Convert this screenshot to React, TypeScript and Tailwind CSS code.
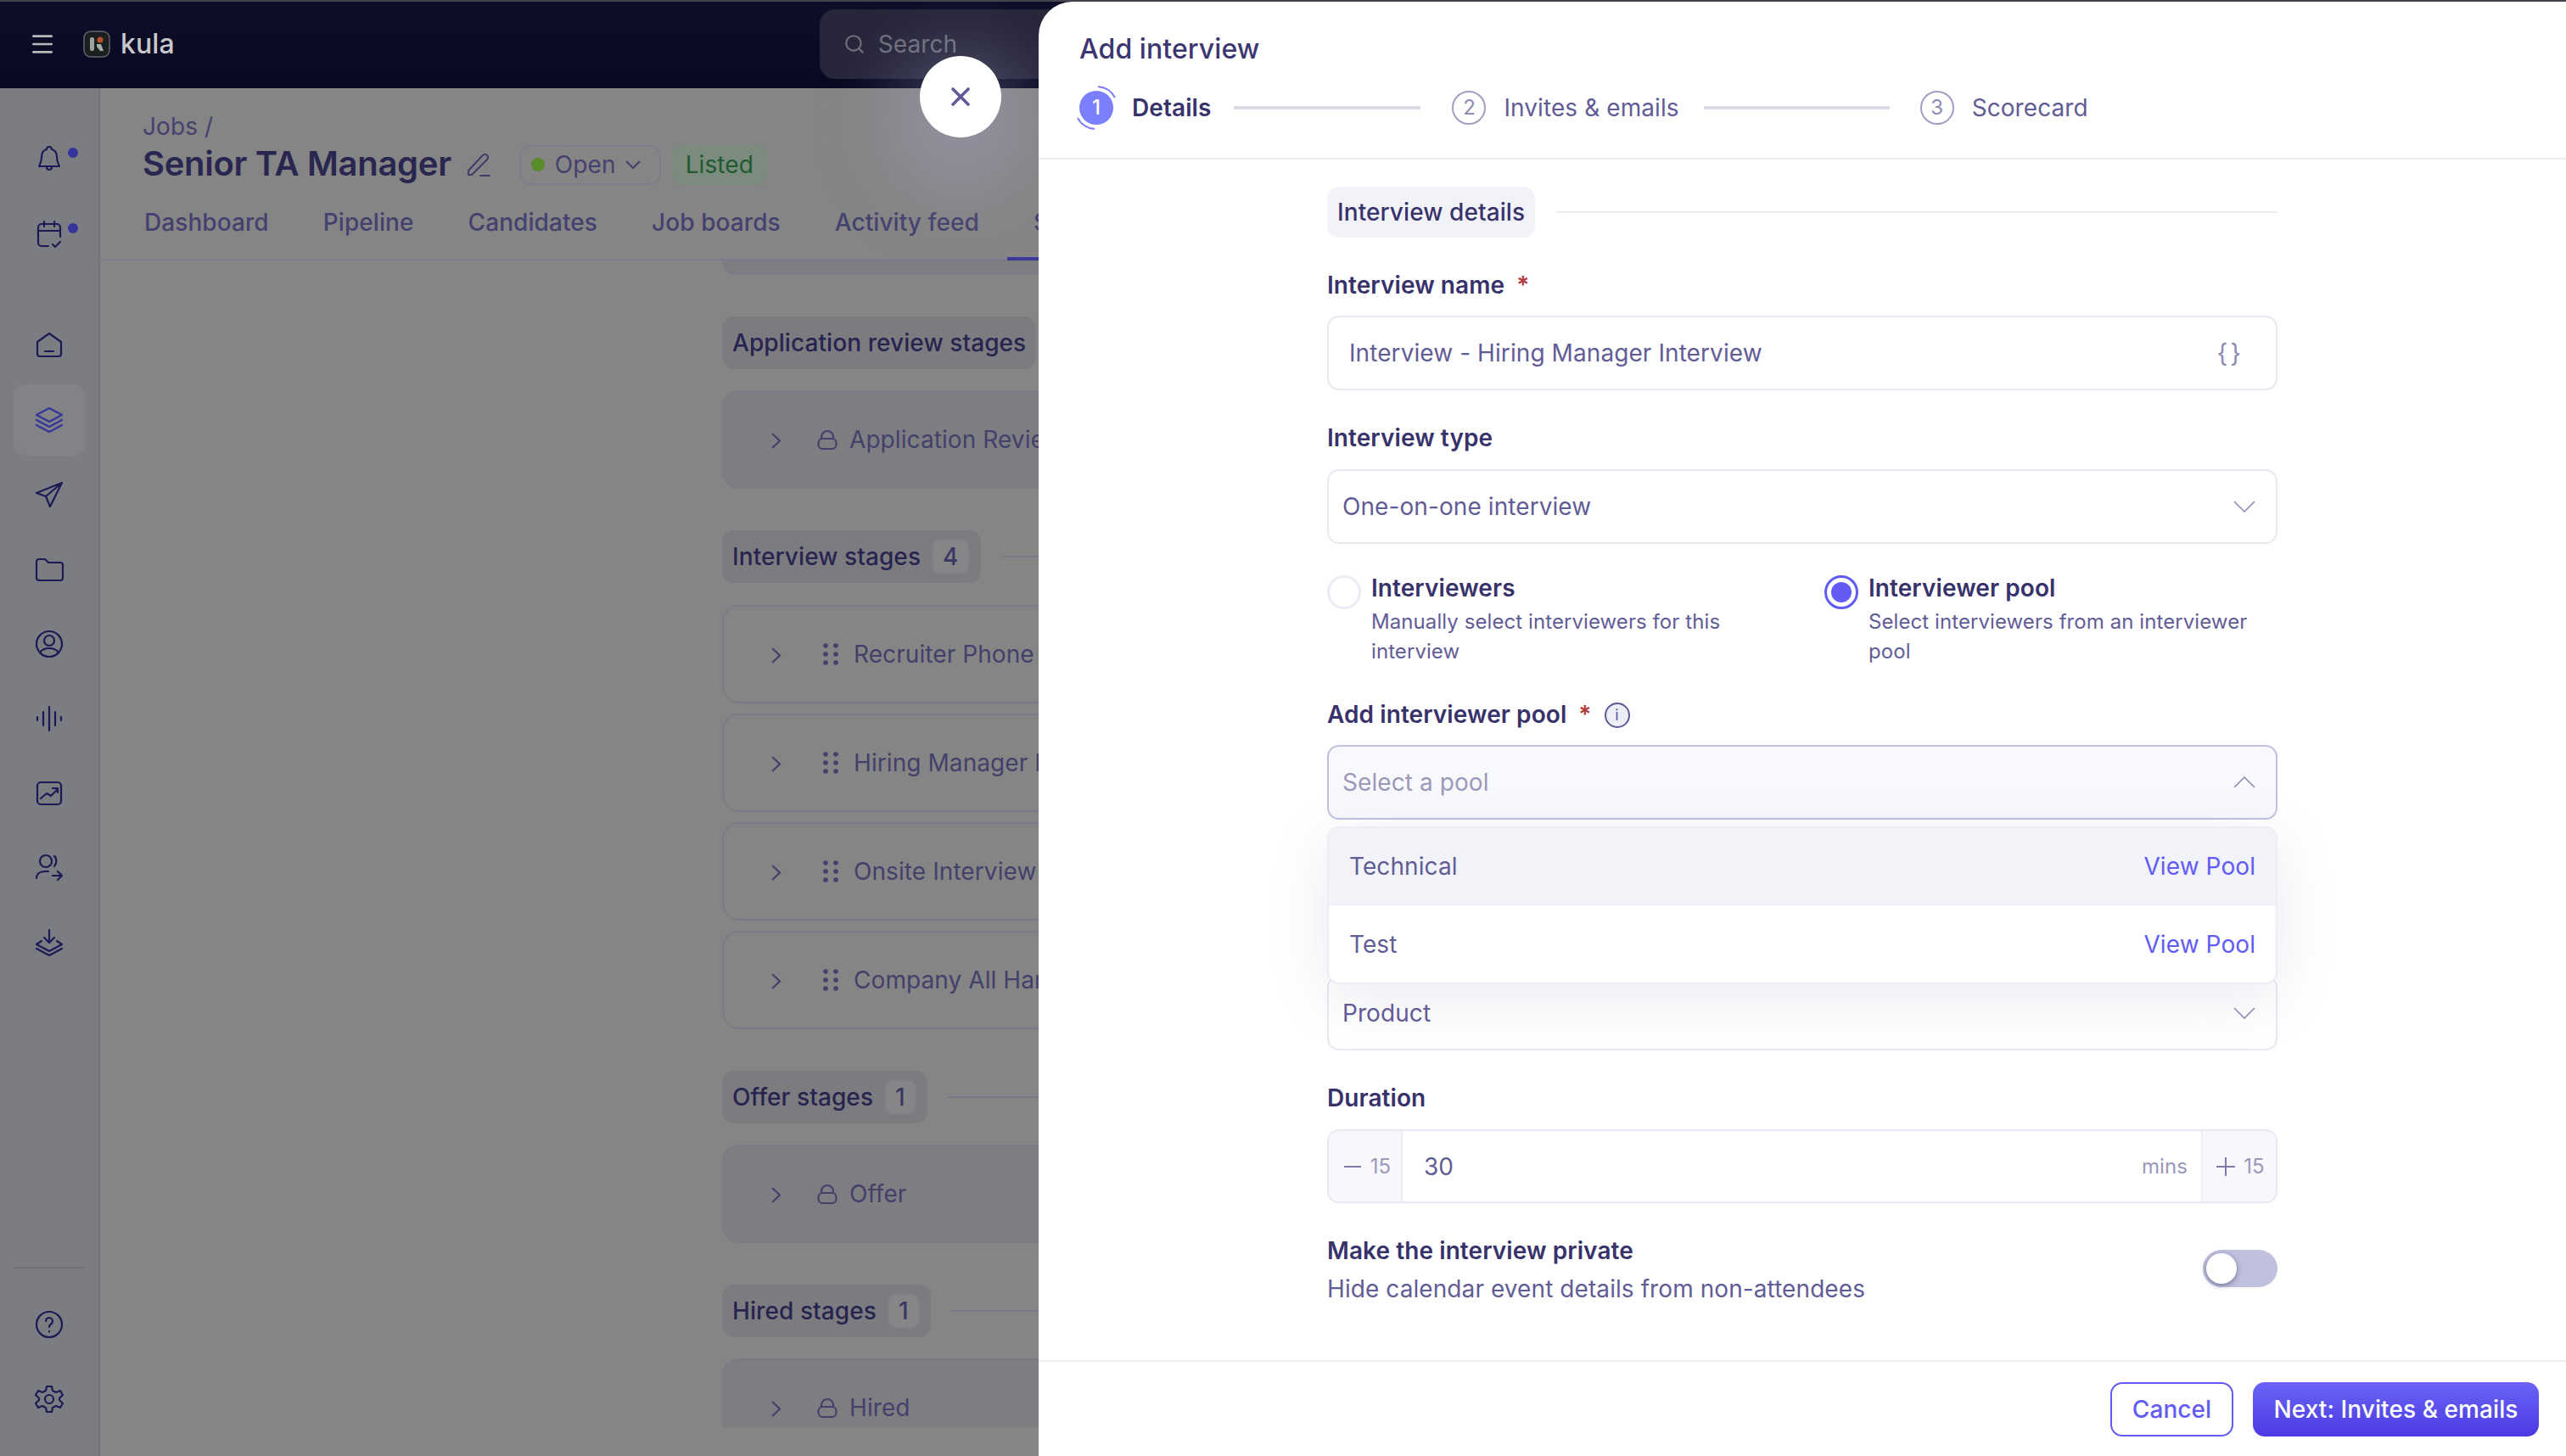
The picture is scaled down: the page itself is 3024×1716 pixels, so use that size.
import { Menu, Search, X } from "lucide-react";
import type { ReactNode } from "react";

const NavIcon = ({ children, active }: { children: ReactNode; active?: boolean }) => (
  <div className={`flex h-[84px] w-[84px] items-center justify-center rounded-[14px] ${active ? "bg-[#828387] text-[#35349a]" : "text-[#1c1a54]"}`}>
    <svg width="36" height="36" viewBox="0 0 36 36" fill="none" stroke="currentColor" strokeWidth="2.2" strokeLinecap="round" strokeLinejoin="round">
      {children}
    </svg>
  </div>
);

const Chevron = ({ up, className }: { up?: boolean; className?: string }) => (
  <svg className={className} width="26" height="14" viewBox="0 0 26 14" fill="none" stroke="currentColor" strokeWidth="1.6">
    <path d={up ? "M1 13 13 1l12 12" : "M1 1l12 12L25 1"} />
  </svg>
);

const Pill = ({ label, count, line }: { label: string; count?: number; line?: boolean }) => (
  <div className="flex items-center">
    <div className={`flex h-[62px] shrink-0 items-center gap-[13px] rounded-[14px] bg-[#7c7c80] pl-[12px] text-[28px] font-medium text-[#27244f] ${count !== undefined ? "pr-[13px]" : "pr-[12px]"}`}>
      {label}
      {count !== undefined && (
        <span className="flex h-[42px] items-center justify-center rounded-[10px] border-2 border-[#7f7f88] bg-[#868688] px-[11px] text-[#3a3765]">
          {count}
        </span>
      )}
    </div>
    {line && <div className="ml-[24px] h-[2px] flex-1 bg-[#79798a]" />}
  </div>
);

const StageCard = ({ label, locked }: { label: string; locked?: boolean }) => (
  <div className={`flex h-[116px] items-center rounded-[20px] border-2 border-[#7b7b86] pl-[55px] text-[28px] text-[#43406b] ${locked ? "bg-[#7e7e82]" : ""}`}>
    <svg className="mt-[2px] shrink-0" width="13" height="21" viewBox="0 0 13 21" fill="none" stroke="currentColor" strokeWidth="2.2">
      <path d="M2 2l9 8.5L2 19" />
    </svg>
    {locked ? (
      <svg className="ml-[42px] mr-[14px] shrink-0" width="24" height="24" viewBox="0 0 24 24" fill="none" stroke="currentColor" strokeWidth="2.2">
        <rect x="1.5" y="11" width="21" height="12" rx="5" />
        <path d="M5 11V9a7 7 0 0 1 14 0v2" />
      </svg>
    ) : (
      <svg className="ml-[49px] mr-[18px] shrink-0" width="18" height="28" viewBox="0 0 18 28" fill="currentColor">
        <circle cx="3" cy="4" r="2.8" />
        <circle cx="15" cy="4" r="2.8" />
        <circle cx="3" cy="14" r="2.8" />
        <circle cx="15" cy="14" r="2.8" />
        <circle cx="3" cy="24" r="2.8" />
        <circle cx="15" cy="24" r="2.8" />
      </svg>
    )}
    <span className="whitespace-nowrap">{label}</span>
  </div>
);

const Label = ({ children, required }: { children: ReactNode; required?: boolean }) => (
  <div className="flex h-[36px] items-center pb-[2px] text-[28px] font-semibold leading-[34px] text-[#38326b]">
    {children}
    {required && <span className="ml-[14px] text-[#b33a3a]">*</span>}
  </div>
);

const SelectBox = ({ value, open, muted }: { value: string; open?: boolean; muted?: boolean }) => (
  <div className={`flex h-[88px] items-center justify-between rounded-[14px] border-2 pl-[16px] pr-[24px] text-[28px] ${open ? "border-[#bfc1de] bg-[#f8f9fd]" : "border-[#e8e8f2] bg-white"} ${muted ? "text-[#9b98ba]" : "text-[#625c96]"}`}>
    {value}
    <Chevron up={open} className="text-[#8f8bb5]" />
  </div>
);

const Radio = ({ title, desc, checked }: { title: string; desc: ReactNode; checked?: boolean }) => (
  <div className="flex w-[586px] gap-[12px]">
    <div className={`flex h-[40px] w-[40px] shrink-0 items-center justify-center rounded-full border-[3px] ${checked ? "border-[#625cf5]" : "border-[#ebebf4]"}`}>
      {checked && <div className="h-[24px] w-[24px] rounded-full bg-[#625cf5]" />}
    </div>
    <div>
      <div className="text-[28px] font-semibold leading-[30px] text-[#38326b]">{title}</div>
      <div className="mt-[7px] text-[24px] leading-[35px] text-[#625c96]">{desc}</div>
    </div>
  </div>
);

const Step = ({ n, label }: { n: number; label: string }) => (
  <div className="flex items-center gap-[21px]">
    <div className="flex h-[40px] w-[40px] items-center justify-center rounded-full border-2 border-[#a19ec2] text-[24px] text-[#8f8bb5]">{n}</div>
    <span className="text-[28px] text-[#625c96]">{label}</span>
  </div>
);

const App = () => {
  return (
    <div className="relative flex h-[1716px] w-[3024px] flex-col overflow-hidden bg-[#858585] font-['Inter',sans-serif] tracking-[0.08px]">
      <div className="h-[2px] bg-[#44454c]" />

      <header className="flex h-[102px] items-center bg-gradient-to-b from-[#0e0e2a] to-[#090922] pb-[2px]">
        <Menu size={32} strokeWidth={2} className="ml-[34px] text-[#b8b8bc]" />
        <svg className="ml-[32px]" width="32" height="32" viewBox="0 0 32 32">
          <rect x="1" y="1" width="30" height="30" rx="8" fill="#1a1f20" stroke="#62646c" strokeWidth="1.5" />
          <rect x="8" y="8" width="5" height="16" rx="2" fill="#9ea3a0" />
          <circle cx="20" cy="11" r="3.5" fill="#b5502f" />
          <path d="M16 16h5l3 8h-4l-4-5z" fill="#a6afa8" />
        </svg>
        <span className="ml-[12px] text-[32px] font-medium text-[#c9c9cc]">kula</span>
        <div className="ml-[760px] flex h-[82px] w-[400px] items-center rounded-[18px] bg-[#26253a] pl-[28px] text-[28px] text-[#6f6f7b]">
          <Search size={26} strokeWidth={2} />
          <span className="ml-[15px]">Search</span>
        </div>
      </header>

      <div className="flex min-h-0 flex-1">
        <aside className="flex w-[118px] shrink-0 flex-col items-center border-r-2 border-[#74757a] bg-[#7c7d82]">
          <div className="relative mt-[41px]">
            <NavIcon>
              <path d="M18 4a3 3 0 0 1 3 3c4 1 6 5 6 9 0 6 2 9 3 11H6c1-2 3-5 3-11 0-4 2-8 6-9a3 3 0 0 1 3-3z" />
              <path d="M15 28a3 3 0 0 0 6 0" />
            </NavIcon>
            <div className="absolute right-[8px] top-[29px] h-[12px] w-[12px] rounded-full bg-[#34359c]" />
          </div>
          <div className="relative mt-[5px]">
            <NavIcon>
              <path d="M17 32H9a4 4 0 0 1-4-4V10a4 4 0 0 1 4-4h18a4 4 0 0 1 4 4v11" />
              <path d="M5 14h26M12 3v6M24 3v6M22 30l3 3 6-6" />
            </NavIcon>
            <div className="absolute right-[8px] top-[29px] h-[12px] w-[12px] rounded-full bg-[#34359c]" />
          </div>
          <div className="mt-[47px]" />
          <div className="flex flex-col gap-[4px]">
            <NavIcon>
              <path d="M4 14 18 4l14 10v14a3 3 0 0 1-3 3H7a3 3 0 0 1-3-3z" />
              <path d="M13 25h10" />
            </NavIcon>
            <NavIcon active>
              <path d="M18 4 33 12 18 20 3 12zM3 18l15 8 15-8M3 24l15 8 15-8" />
            </NavIcon>
            <NavIcon>
              <path d="M33 4 3 16l11 4 5 12zM33 4 14 20" />
            </NavIcon>
            <NavIcon>
              <path d="M3 9a3 3 0 0 1 3-3h7l4 4h14a3 3 0 0 1 3 3v15a3 3 0 0 1-3 3H6a3 3 0 0 1-3-3z" />
            </NavIcon>
            <NavIcon>
              <circle cx="18" cy="18" r="15" />
              <circle cx="18" cy="14" r="6" />
              <path d="M7 28c3-4 7-5 11-5s8 1 11 5" />
            </NavIcon>
            <NavIcon>
              <path d="M4 16v4M11 10v16M18 4v28M25 10v16M32 16v4" />
            </NavIcon>
            <NavIcon>
              <rect x="4" y="5" width="28" height="26" rx="4" />
              <path d="m8 24 7-6 5 3 8-8M22 12h6v5" />
            </NavIcon>
            <NavIcon>
              <circle cx="14" cy="10" r="7" />
              <path d="M24 4c3 2 3 9 0 12M3 30c0-5 4-8 10-8h4M22 27h11M28 22l5 5-5 5" />
            </NavIcon>
            <NavIcon>
              <path d="M18 3v15M12 12l6 6 6-6M9 16l-6 4 15 8 15-8-6-4M3 25l15 8 15-8" />
            </NavIcon>
          </div>
          <div className="mt-[340px] h-[2px] w-[84px] bg-[#717277]" />
          <div className="mt-[24px]">
            <NavIcon>
              <circle cx="18" cy="18" r="15" />
              <path d="M14 14a4 4 0 1 1 6 3.5c-1.5 1-2 2-2 3.5M18 26v.5" />
            </NavIcon>
          </div>
          <div className="mt-[4px]">
            <NavIcon>
              <circle cx="18" cy="18" r="5" />
              <path d="M15 3h6l1 5 4 2 5-2 3 5-4 4v2l4 4-3 5-5-2-4 2-1 5h-6l-1-5-4-2-5 2-3-5 4-4v-2l-4-4 3-5 5 2 4-2z" />
            </NavIcon>
          </div>
        </aside>

        <main className="flex min-w-0 flex-1 flex-col">
          <div className="pl-[50px] pt-[27px]">
            <div className="h-[36px] text-[28px] leading-[36px] text-[#45416f]">Jobs /</div>
            <div className="flex h-[54px] items-center">
              <h1 className="pb-[2px] text-[40px] font-semibold tracking-[-0.3px] text-[#292650]">Senior TA Manager</h1>
              <svg className="ml-[17px] text-[#3f3b6b]" width="30" height="30" viewBox="0 0 30 30" fill="none" stroke="currentColor" strokeWidth="2" strokeLinecap="round" strokeLinejoin="round">
                <path d="M3 27v-5L20 4a3.5 3.5 0 0 1 5 5L7 27z" />
                <path d="M17 28h11" />
              </svg>
              <div className="ml-[33px] flex h-[47px] w-[167px] items-center rounded-[14px] border-2 border-[#7d7c8c] pl-[12px] text-[28px] text-[#45416f]">
                <span className="h-[16px] w-[16px] rounded-full bg-[#5a8b2b]" />
                <span className="ml-[12px]">Open</span>
                <svg className="ml-[10px]" width="20" height="12" viewBox="0 0 20 12" fill="none" stroke="currentColor" strokeWidth="2.2">
                  <path d="M2 2l8 8 8-8" />
                </svg>
              </div>
              <div className="ml-[13px] flex h-[47px] w-[112px] items-center justify-center rounded-[12px] bg-[#7b8b7e] text-[28px] text-[#1f5a2e]">Listed</div>
            </div>
            <nav className="mt-[21px] flex gap-[64px] pl-[2px] text-[28px] font-medium leading-[40px] text-[#45416f]">
              <span>Dashboard</span>
              <span>Pipeline</span>
              <span>Candidates</span>
              <span>Job boards</span>
              <span>Activity feed</span>
              <span>Settings</span>
            </nav>
          </div>
          <div className="relative mt-[23px] h-[2px] bg-[#7d7c8c]">
            <div className="absolute bottom-0 left-[1069px] h-[4px] w-[120px] bg-[#3c3a9c]" />
          </div>

          <div className="ml-[733px] h-[1375px] w-[700px] overflow-hidden">
            <div className="h-[17px] rounded-b-[16px] border-2 border-t-0 border-[#7b7b86] bg-[#7e7e82]" />
            <div className="mt-[49px]"><Pill label="Application review stages" /></div>
            <div className="mt-[25px]"><StageCard label="Application Review" locked /></div>
            <div className="mt-[49px]"><Pill label="Interview stages" count={4} line /></div>
            <div className="mt-[26px] flex flex-col gap-[12px]">
              <StageCard label="Recruiter Phone Screen" />
              <StageCard label="Hiring Manager Interview" />
              <StageCard label="Onsite Interview" />
              <StageCard label="Company All Hands" />
            </div>
            <div className="mt-[49px]"><Pill label="Offer stages" count={1} line /></div>
            <div className="mt-[25px]"><StageCard label="Offer" locked /></div>
            <div className="mt-[49px]"><Pill label="Hired stages" count={1} line /></div>
            <div className="mt-[25px]"><StageCard label="Hired" locked /></div>
          </div>
        </main>
      </div>

      {/* close button sits over the dimmed page */}
      <button className="absolute left-[1084px] top-[66px] z-20 flex h-[96px] w-[96px] items-center justify-center rounded-full bg-white shadow-[0_30px_90px_30px_rgba(165,165,205,0.4)]">
        <X size={36} strokeWidth={2.4} className="text-[#5f5a98]" />
      </button>

      <section className="absolute bottom-0 left-[1224px] right-0 top-[2px] z-30 flex flex-col rounded-tl-[40px] bg-white">
        <div className="h-[186px] shrink-0 border-b-2 border-[#ecedf5] pl-[48px]">
          <h2 className="pt-[34px] text-[32px] font-medium leading-[44px] text-[#3c3670]">Add interview</h2>
          <div className="mt-[26px] flex items-center">
            <div className="relative flex h-[40px] w-[40px] items-center justify-center rounded-full bg-[#7b7ffb] text-[24px] font-medium text-white">
              1
              <svg className="absolute left-[-6px] top-[-6px]" width="52" height="52" viewBox="0 0 52 52" fill="none" stroke="#7b7ffb" strokeWidth="2">
                <path d="M28 1a25 25 0 0 1 20 13" />
                <path d="M4 38a25 25 0 0 0 20 13" />
              </svg>
            </div>
            <span className="ml-[22px] text-[28px] font-semibold text-[#38326b]">Details</span>
            <div className="ml-[27px] mr-[37px] h-[4px] w-[220px] bg-[#d8d9e8]" />
            <Step n={2} label="Invites & emails" />
            <div className="ml-[29px] mr-[36px] h-[4px] w-[219px] bg-[#d8d9e8]" />
            <Step n={3} label="Scorecard" />
          </div>
        </div>

        <div className="min-h-0 flex-1 pl-[340px]">
          <div className="w-[1120px] pt-[32px]">
            <div className="flex items-center">
              <div className="flex h-[60px] items-center rounded-[14px] bg-[#f2f3f9] px-[12px] text-[28px] font-medium text-[#38326b]">Interview details</div>
              <div className="ml-[25px] h-[2px] flex-1 bg-[#ecedf5]" />
            </div>

            <div className="mt-[39px]"><Label required>Interview name</Label></div>
            <div className="mt-[17px] flex h-[88px] items-center justify-between rounded-[14px] border-2 border-[#e8e8f2] pl-[24px] pr-[38px] text-[28px] text-[#625c96]">
              Interview - Hiring Manager Interview
              <span className="text-[30px] tracking-[3px] text-[#8f8bb5]">{"{}"}</span>
            </div>

            <div className="mt-[39px]"><Label>Interview type</Label></div>
            <div className="mt-[18px]"><SelectBox value="One-on-one interview" /></div>

            <div className="mt-[37px] flex justify-between">
              <Radio title="Interviewers" desc={<>Manually select interviewers for this<br />interview</>} />
              <div className="mr-[-52px]">
                <Radio checked title="Interviewer pool" desc={<>Select interviewers from an interviewer<br />pool</>} />
              </div>
            </div>

            <div className="mt-[40px] flex items-center">
              <Label required>Add interviewer pool</Label>
              <div className="ml-[15px] flex h-[30px] w-[30px] items-center justify-center rounded-full border-2 border-[#5d5996] bg-[#eeeef8] text-[18px] leading-none text-[#5d5996]">i</div>
            </div>
            <div className="relative mt-[17px]">
              <SelectBox value="Select a pool" open muted />
              {/* open menu lies over the fields below */}
              <div className="absolute left-0 right-0 top-[96px] z-10 overflow-hidden rounded-[14px] border-2 border-[#ecedf5] bg-white text-[28px] shadow-[0_16px_70px_rgba(90,90,160,0.12)]">
                <div className="flex h-[91px] items-center justify-between border-b-2 border-[#ecedf5] bg-[#f2f3f9] px-[24px]">
                  <span className="text-[#625c96]">Technical</span>
                  <span className="text-[#625cf5]">View Pool</span>
                </div>
                <div className="flex h-[91px] items-center justify-between px-[24px]">
                  <span className="text-[#625c96]">Test</span>
                  <span className="text-[#625cf5]">View Pool</span>
                </div>
              </div>
            </div>

            <div className="mt-[184px]"><SelectBox value="Product" /></div>

            <div className="mt-[39px]"><Label>Duration</Label></div>
            <div className="mt-[18px] flex h-[87px] items-stretch overflow-hidden rounded-[14px] border-2 border-[#e8e8f2]">
              <div className="flex w-[87px] items-center justify-center gap-[11px] border-r-2 border-[#ecedf5] bg-[#f8f8fc] pl-[6px] text-[24px] text-[#9b98ba]">
                <span className="h-[2px] w-[20px] bg-[#7f7ba8]" />
                15
              </div>
              <div className="flex flex-1 items-center justify-between pl-[25px] pr-[16px]">
                <span className="text-[28px] text-[#625c96]">30</span>
                <span className="text-[24px] text-[#9b98ba]">mins</span>
              </div>
              <div className="flex w-[88px] items-center justify-center gap-[10px] border-l-2 border-[#ecedf5] bg-[#f8f8fc] pl-[3px] text-[24px] text-[#9b98ba]">
                <svg width="22" height="22" viewBox="0 0 22 22" stroke="#7f7ba8" strokeWidth="2">
                  <path d="M11 0v22M0 11h22" />
                </svg>
                15
              </div>
            </div>

            <div className="mt-[39px] flex justify-between">
              <div>
                <Label>Make the interview private</Label>
                <div className="mt-[8px] text-[28px] leading-[36px] text-[#625c96]">Hide calendar event details from non-attendees</div>
              </div>
              <div className="mt-[16px] flex h-[44px] w-[88px] items-center rounded-full bg-[#bfc1de] pl-[4px]">
                <div className="h-[36px] w-[36px] rounded-full bg-white shadow-[0_2px_6px_rgba(40,40,80,0.5)]" />
              </div>
            </div>
          </div>
        </div>

        <footer className="flex h-[113px] shrink-0 items-center justify-end gap-[23px] border-t-2 border-[#ecedf5] pr-[32px] text-[28px] font-medium">
          <button className="h-[64px] w-[145px] rounded-[14px] border-2 border-[#625cf5] text-[#625cf5]">Cancel</button>
          <button className="h-[64px] w-[337px] rounded-[14px] bg-gradient-to-b from-[#6a63f6] to-[#4c38e3] text-white">Next: Invites &amp; emails</button>
        </footer>
      </section>
    </div>
  );
};

export default App;
